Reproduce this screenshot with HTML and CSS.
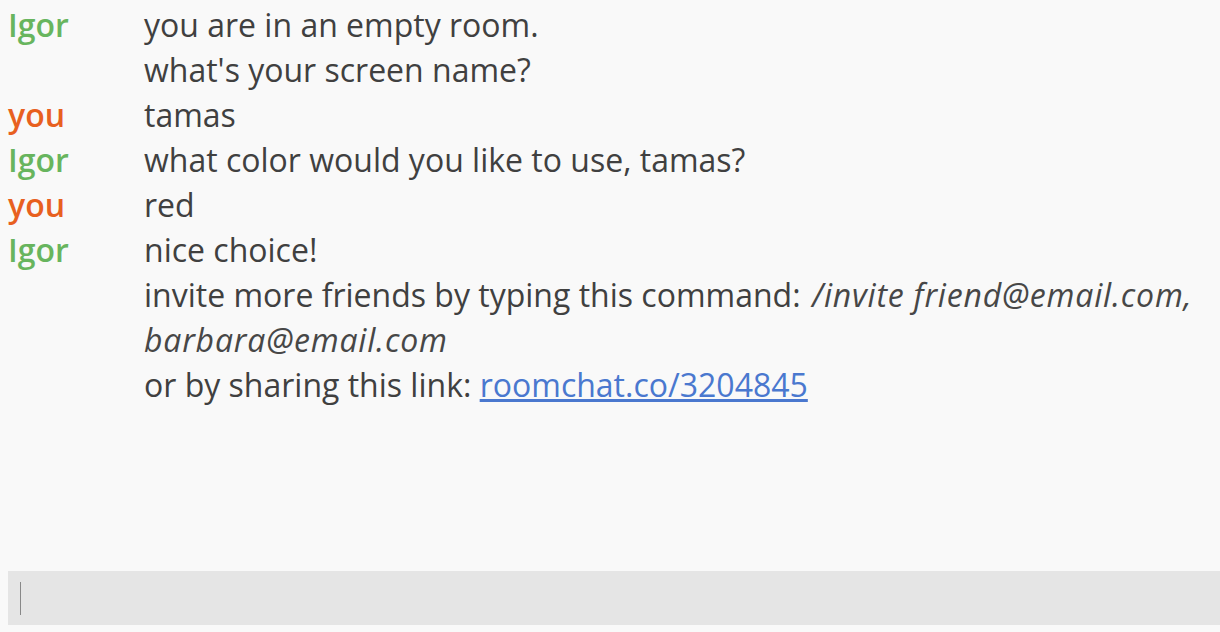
FILE: index.html
```html
<!DOCTYPE html>
<html lang="en">
<head>
  <meta charset="UTF-8">
  <title>roomchat</title>
  <link rel="stylesheet" href="styles.css">
</head>
<body>
  <div class="chat">
    <div class="log">
      <div class="line"><span class="who bot">Igor</span><span class="msg">you are in an empty room.</span></div>
      <div class="line"><span class="who"></span><span class="msg">what's your screen name?</span></div>
      <div class="line"><span class="who me">you</span><span class="msg">tamas</span></div>
      <div class="line"><span class="who bot">Igor</span><span class="msg">what color would you like to use, tamas?</span></div>
      <div class="line"><span class="who me">you</span><span class="msg">red</span></div>
      <div class="line"><span class="who bot">Igor</span><span class="msg">nice choice!</span></div>
      <div class="line"><span class="who"></span><span class="msg">invite more friends by typing this command: <em>/invite friend@email.com, barbara@email.com</em></span></div>
      <div class="line"><span class="who"></span><span class="msg">or by sharing this link: <a href="#">roomchat.co/3204845</a></span></div>
    </div>
    <div class="input">
      <span class="caret"></span>
    </div>
  </div>
</body>
</html>
```

FILE: styles.css
```css
html, body {
  margin: 0;
  height: 100%;
  background-color: #f9f9f9;
  font-family: "Open Sans", sans-serif;
}

.chat {
  display: flex;
  flex-direction: column;
  height: 100vh;
}

.log {
  flex: 1;
  padding: 2px 0 0 8px;
  font-size: 32px;
  line-height: 45px;
  color: #404040;
}

.line {
  display: grid;
  grid-template-columns: 136px 1fr;
}

.who {
  font-weight: 600;
}

.who.bot {
  color: #68b55e;
}

.who.me {
  color: #e8601f;
}

.msg em {
  font-style: italic;
  letter-spacing: 0.8px;
  padding-left: 3px;
  color: #474747;
}

.msg a {
  color: #4a78cf;
}

.input {
  margin: 0 0 7px 8px;
  height: 54px;
  background-color: #e5e5e5;
  display: flex;
  align-items: center;
  padding-left: 12px;
}

.caret {
  width: 1px;
  height: 33px;
  background-color: #888;
}
```
